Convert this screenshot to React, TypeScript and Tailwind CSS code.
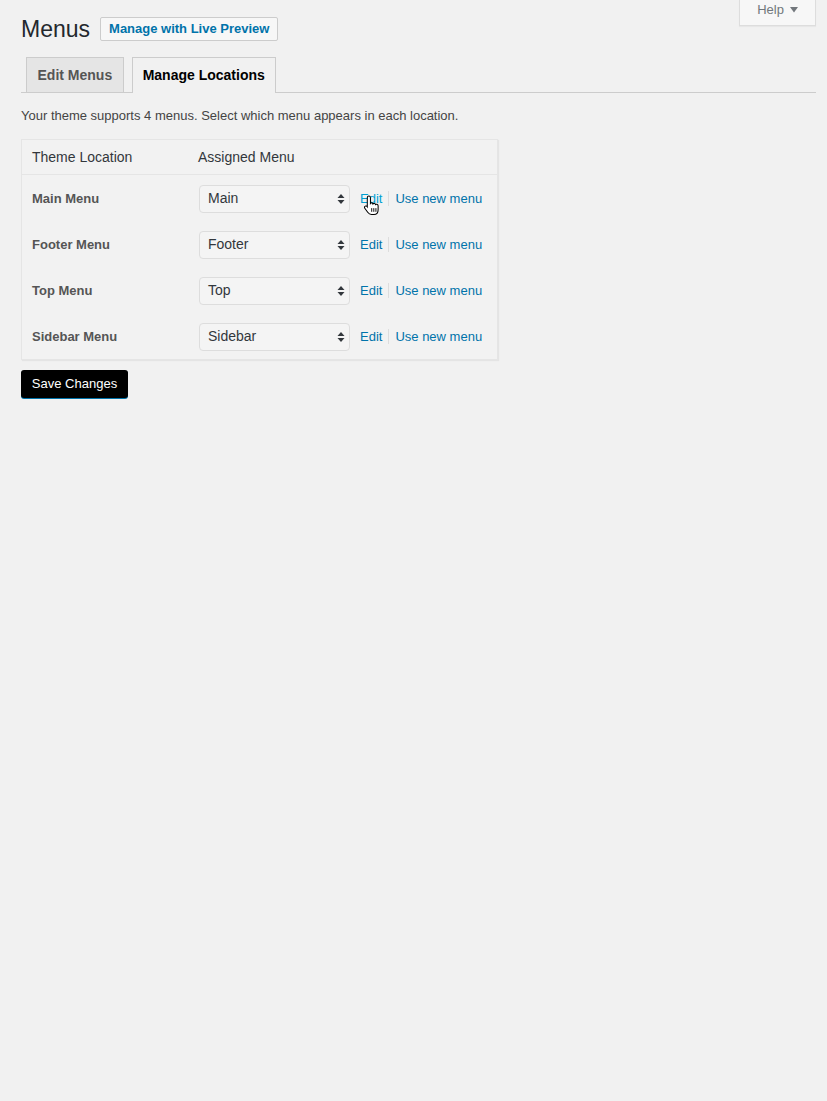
const locations = [
  { label: "Main Menu", menu: "Main", hover: true },
  { label: "Footer Menu", menu: "Footer" },
  { label: "Top Menu", menu: "Top" },
  { label: "Sidebar Menu", menu: "Sidebar" },
];

// up/down arrows drawn on the right of the select box
function SelectArrows() {
  return (
    <svg width="8" height="12" viewBox="0 0 8 12" className="shrink-0">
      <path d="M4 1 L7.5 5 H0.5 Z" fill="#32373c" />
      <path d="M4 11 L7.5 7 H0.5 Z" fill="#32373c" />
    </svg>
  );
}

// mouse pointer that sits over the first Edit link in the screenshot
function HandCursor() {
  return (
    <svg width="17" height="21" viewBox="0 0 16 20">
      <path
        d="M5.5 1 C6.3 1 7 1.7 7 2.5 V8 C7.3 7.6 7.8 7.4 8.3 7.5 C8.9 7.6 9.3 8 9.4 8.5 C9.7 8.1 10.2 7.9 10.8 8 C11.4 8.1 11.8 8.6 11.9 9.1 C12.2 8.8 12.7 8.7 13.2 8.8 C13.9 9 14.3 9.6 14.3 10.3 V14 C14.3 16.5 12.8 18.5 10.3 18.5 H8 C6.4 18.5 5.3 17.8 4.4 16.5 L1.6 12.6 C1.1 11.9 1.3 11 2 10.6 C2.6 10.2 3.4 10.4 3.8 11 L4 11.3 V2.5 C4 1.7 4.7 1 5.5 1 Z"
        fill="#fff"
        stroke="#000"
        strokeWidth="1"
      />
      <path d="M8.2 12.5 V16 M10.2 12.5 V16 M12.2 12.5 V16" stroke="#000" strokeWidth="0.9" />
    </svg>
  );
}

export default function App() {
  return (
    <div className="relative min-h-screen bg-[#f1f1f1] font-['Liberation_Sans',Arial,sans-serif] text-[#444]">
      {/* Help tab in the top right corner */}
      <button className="absolute right-[11px] top-0 flex h-[26px] w-[77px] items-center justify-center gap-[6px] border border-t-0 border-[#ddd] bg-[#f7f7f7] pb-[6px] text-[13px] text-[#72777c] shadow-[0_1px_1px_rgba(0,0,0,0.04)]">
        Help
        <svg width="8" height="6" viewBox="0 0 8 6">
          <path d="M0 0 H8 L4 5.5 Z" fill="#72777c" />
        </svg>
      </button>

      <div className="pl-[21px] pr-[11px] pt-[17px]">
        {/* Heading */}
        <div className="flex h-[24px] items-center gap-[10px]">
          <h1 className="text-[23px] leading-none text-[#23282d]">Menus</h1>
          <button className="flex h-[24px] items-center rounded-[2px] border border-[#ccc] bg-[#f7f7f7] px-[8px] text-[13px] font-bold text-[#0073aa]">
            Manage with Live Preview
          </button>
        </div>

        {/* Tabs */}
        <div className="mt-[16px] flex items-end gap-[8px] border-b border-[#ccc] pl-[5px]">
          <div className="flex h-[35px] items-center border border-b-0 border-[#ccc] bg-[#e5e5e5] px-[10.5px] text-[14px] font-bold text-[#555]">
            Edit Menus
          </div>
          <div className="-mb-px flex h-[36px] items-center border border-b-0 border-[#ccc] bg-[#f1f1f1] px-[10px] pb-px text-[14px] font-bold text-black">
            Manage Locations
          </div>
        </div>

        <p className="mt-[13px] text-[13px] leading-[19px] text-[#444]">
          Your theme supports 4 menus. Select which menu appears in each location.
        </p>

        {/* Locations table */}
        <div className="mt-[14px] w-[477px] border border-[#e5e5e5] bg-[#f2f2f2] shadow-[1px_1px_1px_rgba(0,0,0,0.05)]">
          <div className="flex h-[35px] items-center border-b border-[#e5e5e5] text-[14px] text-[#32373c]">
            <div className="w-[176px] pl-[10px]">Theme Location</div>
            <div>Assigned Menu</div>
          </div>
          {locations.map((loc) => (
            <div key={loc.label} className="flex h-[46px] items-center pt-px">
              <div className="w-[177px] pl-[10px] text-[13px] font-bold text-[#555]">{loc.label}</div>
              <div className="flex h-[28px] w-[151px] items-center justify-between rounded-[4px] border border-[#ddd] bg-[#f4f4f4] pl-[8px] pr-[4px] text-[14px] text-[#32373c]">
                <span>{loc.menu}</span>
                <SelectArrows />
              </div>
              <div className="relative ml-[10px] flex items-center text-[13px]">
                <span className={loc.hover ? "text-[#00a0d2]" : "text-[#0073aa]"}>Edit</span>
                <span className="mx-[6px] h-[15px] w-px bg-[#ddd]" />
                <span className="text-[#0073aa]">Use new menu</span>
                {loc.hover && (
                  <div className="absolute left-[3px] top-[6px]">
                    <HandCursor />
                  </div>
                )}
              </div>
            </div>
          ))}
        </div>

        <button className="mt-[10px] flex h-[28px] w-[107px] items-center justify-center rounded-[3px] bg-black text-[13px] text-white shadow-[0_1px_0_#0073aa]">
          Save Changes
        </button>
      </div>
    </div>
  );
}
